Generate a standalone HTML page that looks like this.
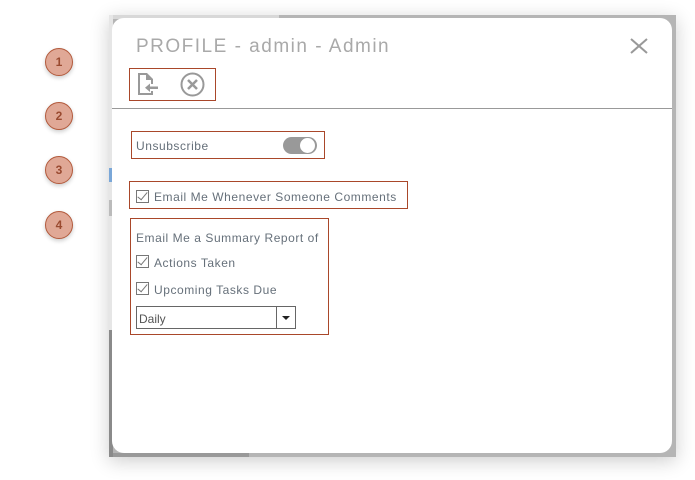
<!DOCTYPE html>
<html><head><style>
body{margin:0;width:695px;height:480px;background:#fff;position:relative;overflow:hidden;font-family:"Liberation Sans",sans-serif;}
.frame{position:absolute;left:109px;top:15px;width:567px;height:442px;background:#b5b5b5;box-shadow:0 4px 18px rgba(0,0,0,.2);}
.frame .top{position:absolute;left:0;top:0;width:170px;height:4px;background:#d8d8d8}
.frame .strip{position:absolute;left:0;top:0;width:4px;height:442px;background:#e6e6e6}
.dlg{position:absolute;left:112px;top:18px;width:560px;height:435px;background:#fff;border-radius:12px;}
.num{position:absolute;left:45px;width:26px;height:26px;border-radius:50%;background:#e0a896;border:1px solid #b35a3c;color:#9a4a30;font-size:12px;font-weight:bold;text-align:center;line-height:26px;box-shadow:0 2px 4px rgba(0,0,0,.2);}
.box{position:absolute;border:1px solid #a9472a;}
.t{position:absolute;color:#66707a;font-size:12px;white-space:nowrap;letter-spacing:.55px}
.cb{position:absolute;width:11px;height:11px;border:1px solid #777;}
.cb:after{content:"";position:absolute;left:3px;top:-1px;width:4px;height:9px;border:solid #777;border-width:0 1px 1px 0;transform:rotate(40deg);}
</style></head><body>
<div class="frame"><div class="top"></div><div class="strip"></div>
<div style="position:absolute;left:0;top:153px;width:4px;height:14px;background:#7aa7d8"></div>
<div style="position:absolute;left:0;top:185px;width:4px;height:16px;background:#bbb"></div>
<div style="position:absolute;left:0;top:315px;width:4px;height:127px;background:#8a8a8a"></div>
<div style="position:absolute;left:4px;top:438px;width:136px;height:4px;background:#999"></div>
</div>
<div class="dlg"></div>
<div class="num" style="top:48px">1</div>
<div class="num" style="top:102px">2</div>
<div class="num" style="top:156px">3</div>
<div class="num" style="top:211px">4</div>
<div class="t" style="left:136px;top:36px;font-size:19px;color:#a9a9a9;letter-spacing:1.5px">PROFILE - admin - Admin</div>
<svg style="position:absolute;left:630px;top:38px" width="18" height="16"><path d="M1 1L17 15M17 1L1 15" stroke="#999" stroke-width="2"/></svg>
<div class="box" style="left:129px;top:68px;width:85px;height:31px"></div>
<svg style="position:absolute;left:137px;top:72px;overflow:visible" width="24" height="24" viewBox="0 0 24 24">
<rect x="1" y="1" width="2" height="22" fill="#999"/>
<rect x="1" y="21" width="15" height="2" fill="#999"/>
<rect x="1" y="1" width="9" height="2" fill="#999"/>
<polygon points="10,1 16,7 16,12 14,12 14,8 9,8 9,1" fill="#999"/>
<rect x="14" y="19" width="2" height="4" fill="#999"/>
<rect x="11" y="14.5" width="10" height="2.5" fill="#999"/>
<polygon points="8,15.75 13,11.5 13,20" fill="#999"/>
</svg>
<svg style="position:absolute;left:180px;top:72px" width="25" height="25"><circle cx="12.5" cy="12.5" r="11" fill="none" stroke="#999" stroke-width="2"/><path d="M8 8L17 17M17 8L8 17" stroke="#999" stroke-width="2.5"/></svg>
<div style="position:absolute;left:112px;top:108px;width:560px;height:1px;background:#999"></div>
<div class="box" style="left:131px;top:131px;width:192px;height:26px"></div>
<div class="t" style="left:136px;top:139px">Unsubscribe</div>
<div style="position:absolute;left:283px;top:137px;width:34px;height:17px;border-radius:9px;background:#999"></div>
<div style="position:absolute;left:300px;top:138px;width:15px;height:15px;border-radius:50%;background:#fff"></div>
<div class="box" style="left:129px;top:181px;width:277px;height:26px"></div>
<div class="cb" style="left:136px;top:190px"></div>
<div class="t" style="left:154px;top:190px">Email Me Whenever Someone Comments</div>
<div class="box" style="left:130px;top:218px;width:197px;height:115px"></div>
<div class="t" style="left:136px;top:231px">Email Me a Summary Report of</div>
<div class="cb" style="left:136px;top:255px"></div>
<div class="t" style="left:154px;top:256px">Actions Taken</div>
<div class="cb" style="left:136px;top:282px"></div>
<div class="t" style="left:154px;top:283px">Upcoming Tasks Due</div>
<div style="position:absolute;left:136px;top:306px;width:160px;height:23px;border:1px solid #666;box-sizing:border-box"></div>
<div style="position:absolute;left:276px;top:306px;width:1px;height:23px;background:#666"></div>
<div class="t" style="left:139px;top:312px;color:#555;letter-spacing:0">Daily</div>
<div style="position:absolute;left:282px;top:316px;border:4px solid transparent;border-top:4px solid #222"></div>
</body></html>
